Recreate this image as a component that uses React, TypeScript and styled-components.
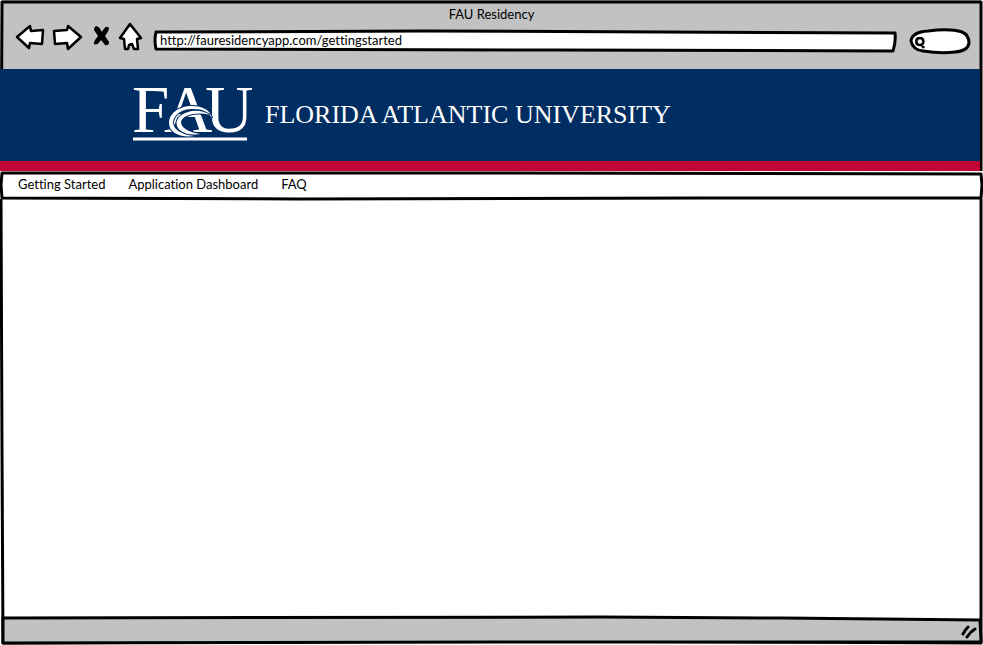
import React from "react";
import styled, { createGlobalStyle } from "styled-components";

const GlobalStyle = createGlobalStyle`
  *, *::before, *::after { box-sizing: border-box; }
  body { margin: 0; background: #fff; color: #000; }
  body, input, button {
    font-family: Lato, "Open Sans", sans-serif;
    font-size: 13px;
    line-height: 18px;
    font-variant-ligatures: none;
  }
`;

const BrowserWindow = styled.div`
  position: relative;
  display: flex;
  flex-direction: column;
  min-height: 100vh;
  padding-bottom: 2px;
`;

const Outline = styled.svg`
  position: absolute;
  inset: 0;
  width: 100%;
  height: 100%;
  overflow: visible;
  pointer-events: none;
  fill: none;
  stroke: #000;
  stroke-width: 3px;
  stroke-linejoin: round;
  stroke-linecap: round;

  path { vector-effect: non-scaling-stroke; }
`;

const Chrome = styled.header`
  height: 69px;
  margin: 0 2px;
  padding-top: 5px;
  background: #c2c2c2;
`;

const WindowTitle = styled.h1`
  margin: 0;
  font-size: 13px;
  line-height: 18px;
  font-weight: 400;
  text-align: center;
`;

const Toolbar = styled.div`
  display: flex;
  align-items: flex-start;
  padding: 0 11px 0 13px;
`;

const ToolButtons = styled.div`
  display: flex;
  gap: 9px;
  margin-right: 12px;
`;

const ToolButton = styled.button<{ $width: number }>`
  width: ${(p) => p.$width}px;
  height: 30px;
  padding: 0;
  border: 0;
  background: none;

  svg { display: block; overflow: visible; }
`;

const AddressField = styled.label`
  position: relative;
  flex: 1;
  height: 22px;
  margin: 7px 15px 0 0;
`;

const SearchField = styled.label`
  position: relative;
  width: 60px;
  height: 24px;
  margin-top: 6px;
`;

const FieldShape = styled(Outline)`
  fill: #fff;
`;

const FieldInput = styled.input<{ $inset: number }>`
  position: relative;
  display: block;
  width: 100%;
  height: 20px;
  padding: 0 6px 0 ${(p) => p.$inset}px;
  border: 0;
  outline: 0;
  background: none;
  color: #000;
`;

const SearchIcon = styled.svg`
  position: absolute;
  left: 5px;
  top: 8px;
`;

const Banner = styled.div`
  position: relative;
  display: flex;
  align-items: flex-start;
  gap: 12px;
  height: 102px;
  margin-right: 3px;
  padding: 17px 0 0 132px;
  background: #002d62;
  border-bottom: 10px solid #c10435;
`;

const UniversityName = styled.p`
  margin: 13px 0 0;
  color: #fff;
  font-family: "Liberation Serif", serif;
  font-size: 26px;
  line-height: 32px;
  white-space: nowrap;
`;

const Nav = styled.nav`
  position: relative;
  display: flex;
  gap: 23px;
  height: 28px;
  padding: 4px 18px;
  background: #fff;
`;

const NavLink = styled.a`
  position: relative;
  color: #000;
  text-decoration: none;
`;

const Content = styled.main`
  flex: 1;
  margin: 0 2px;
`;

const StatusBar = styled.footer`
  position: relative;
  display: flex;
  justify-content: flex-end;
  height: 26px;
  margin: 0 2px;
  padding: 8px 3px 0 0;
`;

const StatusShape = styled(Outline)`
  fill: #c2c2c2;
`;

const Grip = styled.svg`
  position: relative;
`;

const icons = [
  { label: "Back", width: 29, d: "M2 14 15 3l1 5 12-1-1 14-12-1-1 5z" },
  { label: "Forward", width: 29, d: "M1 8l13-1 1-4 13 11-13 12-1-6-12 1z" },
];

function Logo() {
  return (
    <svg width="121" height="56" viewBox="0 0 121 56" overflow="visible" role="img" aria-label="FAU">
      <text y="46" fill="#fff" fontFamily="Liberation Serif, serif" fontSize="67">
        <tspan x="0">F</tspan>
        <tspan x="32">A</tspan>
        <tspan x="73">U</tspan>
      </text>
      <path
        d="M80 32C78 23 69 20 60 20 46 20 37 28 37 37 37 46 47 52 63 50 48 48 41 43 41 36 42 28 51 22 62 23 71 23 76 26 80 32z"
        fill="#fff" stroke="#002d62" strokeWidth="2" paintOrder="stroke"
      />
      <path
        d="M78 29C71 24 62 24 56 26 48 28 43 34 45 40 47 46 56 50 68 48 57 46 49 42 49 36 50 30 62 25 78 29z"
        fill="#fff" stroke="#002d62" strokeWidth="2" paintOrder="stroke"
      />
      <path d="M1 53h114" stroke="#fff" strokeWidth="3" />
    </svg>
  );
}

export default function App() {
  return (
    <>
      <GlobalStyle />
      <BrowserWindow>
        <Chrome>
          <WindowTitle>FAU Residency</WindowTitle>
          <Toolbar>
            <ToolButtons>
              {icons.map((icon) => (
                <ToolButton key={icon.label} $width={icon.width} aria-label={icon.label}>
                  <svg width={icon.width} height="30" fill="#fff" stroke="#000" strokeWidth="2.5" strokeLinejoin="round">
                    <path d={icon.d} />
                  </svg>
                </ToolButton>
              ))}
              <ToolButton $width={19} aria-label="Stop">
                <svg width="19" height="30" fill="#000">
                  <path d="M5 3Q8 3 11 9 14 3 17 4 20 5 14 13L18 19Q18 23 14 22L10 17Q6 23 3 21 2 19 7 13L3 7Q3 4 5 3z" />
                </svg>
              </ToolButton>
              <ToolButton $width={23} aria-label="Home">
                <svg width="23" height="30" fill="#fff" stroke="#000" strokeWidth="2.5" strokeLinejoin="round">
                  <path d="M11 1 1 15l4 1 1 10h3l1-4 3-1 2 5h4l-1-10 4-1z" />
                </svg>
              </ToolButton>
            </ToolButtons>
            <AddressField>
              <FieldShape viewBox="0 0 740 22" preserveAspectRatio="none" aria-hidden="true">
                <path d="M2 2 270 1 740 3Q741 12 738 21L400 20 2 19Q0 10 2 2z" />
              </FieldShape>
              <FieldInput $inset={6} aria-label="Address" defaultValue="http://fauresidencyapp.com/gettingstarted" />
            </AddressField>
            <SearchField>
              <FieldShape viewBox="0 0 60 24" preserveAspectRatio="none" aria-hidden="true">
                <path d="M1 12Q2 3 18 2 40-1 52 3 59 6 59 14 58 22 45 23 31 25 13 22 3 21 1 12z" />
              </FieldShape>
              <FieldInput $inset={18} type="search" aria-label="Search" />
              <SearchIcon width="12" height="12" fill="none" stroke="#000" strokeWidth="2.5">
                <path d="M5 1C0 1 0 8 5 8S9 1 5 1M6 7l3 4" />
              </SearchIcon>
            </SearchField>
          </Toolbar>
        </Chrome>
        <Outline viewBox="0 0 983 645" preserveAspectRatio="none" aria-hidden="true">
          <path d="M2 2 981 2 981 250 981 643 500 641 3 643 2 450 1 200z" />
        </Outline>
        <Banner>
          <Logo />
          <UniversityName>FLORIDA ATLANTIC UNIVERSITY</UniversityName>
        </Banner>
        <Nav aria-label="Main">
          <Outline viewBox="0 0 983 28" preserveAspectRatio="none" aria-hidden="true">
            <path d="M2 2 500 2 981 3 982 14 981 27 700 27 300 28 2 27 1 14z" />
          </Outline>
          <NavLink href="#getting-started">Getting Started</NavLink>
          <NavLink href="#dashboard">Application Dashboard</NavLink>
          <NavLink href="#faq">FAQ</NavLink>
        </Nav>
        <Content />
        <StatusBar>
          <StatusShape viewBox="0 0 979 26" preserveAspectRatio="none" aria-hidden="true">
            <path d="M1 1 600 0 780 1 978 3 979 25 500 25 1 26z" />
          </StatusShape>
          <Grip width="18" height="14" fill="none" stroke="#000" strokeWidth="3" strokeLinecap="round" aria-hidden="true">
            <path d="M3 9Q5 5 8 2M7 12Q10 7 15 4" />
          </Grip>
        </StatusBar>
      </BrowserWindow>
    </>
  );
}
